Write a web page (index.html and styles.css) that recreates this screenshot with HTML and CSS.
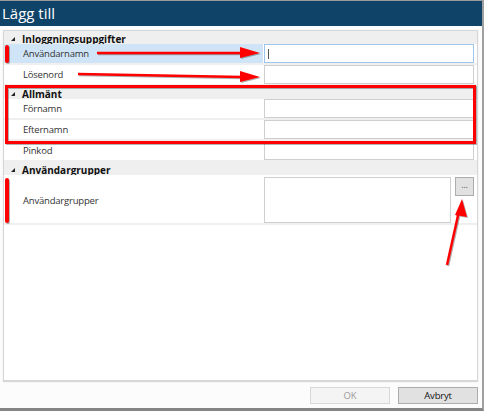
FILE: index.html
```html
<!DOCTYPE html>
<html>

<head>
    <meta name="viewport" content="width=device-width, initial-scale=1">
    <title>Lägg till</title>
    <link rel="stylesheet" href="styles.css">
</head>

<body>
    <div class="window">
        <div class="titlebar">Lägg till</div>

        <div class="content">
            <div class="grid">
                <div class="category"><span class="arrow"></span>Inloggningsuppgifter</div>
                <div class="row selected">
                    <div class="label">Användarnamn</div>
                    <div class="value"><div class="field focused"><span class="caret"></span></div></div>
                </div>
                <div class="row">
                    <div class="label">Lösenord</div>
                    <div class="value"><div class="field"></div></div>
                </div>

                <div class="category"><span class="arrow"></span>Allmänt</div>
                <div class="row">
                    <div class="label">Förnamn</div>
                    <div class="value"><div class="field"></div></div>
                </div>
                <div class="row">
                    <div class="label">Efternamn</div>
                    <div class="value"><div class="field"></div></div>
                </div>
                <div class="row">
                    <div class="label">Pinkod</div>
                    <div class="value"><div class="field"></div></div>
                </div>

                <div class="category"><span class="arrow"></span>Användargrupper</div>
                <div class="row tall">
                    <div class="label">Användargrupper</div>
                    <div class="value">
                        <div class="field area"></div>
                        <div class="dots">...</div>
                    </div>
                </div>
                <div class="empty"></div>
            </div>
        </div>

        <div class="footer">
            <div class="button disabled">OK</div>
            <div class="button">Avbryt</div>
        </div>

        <!-- red markup drawn on top of the dialog -->
        <svg class="marks" width="484" height="411" viewBox="0 0 484 411">
            <g fill="#f00" stroke="#f00">
                <rect x="5" y="44" width="4" height="18" rx="2" stroke="none" />
                <rect x="5" y="177" width="4" height="45" rx="2" stroke="none" />

                <line x1="97" y1="52" x2="242" y2="52" stroke-width="2.5" />
                <polygon points="240,46 260,52 240,57" stroke="none" />

                <line x1="78" y1="73" x2="242" y2="76" stroke-width="2.5" />
                <polygon points="240,70 260,76 240,81" stroke="none" />

                <rect x="6.5" y="85.5" width="468" height="56" fill="none" stroke-width="3" />

                <line x1="447" y1="264" x2="459" y2="210" stroke-width="2.5" />
                <polygon points="462,198 467,216 455,214" stroke="none" />
            </g>
        </svg>
    </div>
</body>

</html>
```

FILE: styles.css
```css
body {
    margin: 0;
    font-family: "Open Sans", "Noto Sans", sans-serif;
    font-size: 9.5px;
    letter-spacing: -0.2px;
    color: #333;
}

.window {
    position: relative;
    width: 484px;
    height: 411px;
    box-sizing: border-box;
    display: flex;
    flex-direction: column;
    background-color: #fcfcfc;
    border-top: 1px solid #9a9a9a;
    border-right: 2px solid #a0a0a0;
    border-bottom: 3px solid #858585;
}

.titlebar {
    height: 25px;
    line-height: 24px;
    padding-left: 2px;
    background-color: #0f4468;
    color: white;
    font-size: 15px;
    letter-spacing: 0;
}

.content {
    padding: 4px 4px 0 3px;
}

.grid {
    height: 349px;
    display: flex;
    flex-direction: column;
    border: 1px solid #d6d6d6;
    background-color: #efefef;
    box-shadow: 0 1px 1px #d8d8d8;
}

.category {
    height: 13px;
    flex-shrink: 0;
    display: flex;
    align-items: center;
    padding: 3px 0 0 7px;
    box-sizing: border-box;
    font-size: 10px;
    letter-spacing: 0;
    font-weight: bold;
    color: #111;
}

.arrow {
    width: 0;
    height: 0;
    margin: 0 7px 0 0;
    border-left: 4px solid transparent;
    border-bottom: 4px solid #222;
}

.row {
    display: flex;
    flex-shrink: 0;
    height: 19px;
    margin-bottom: 2px;
    background-color: white;
}

.row.tall {
    height: 48px;
}

.label {
    width: 240px;
    padding-left: 19px;
    line-height: 20px;
}

.row.tall .label {
    line-height: 52px;
}

.row.selected .label {
    background-color: #cfe5f7;
}

.value {
    flex: 1;
    display: flex;
    gap: 4px;
    padding-left: 1px;
    padding-right: 3px;
    background-color: white;
}

.field {
    flex: 1;
    height: 19px;
    box-sizing: border-box;
    border: 1px solid #cfcfcf;
    background-color: white;
}

.field.focused {
    border-color: #9ec6ec;
    padding: 4px 0 0 3px;
}

.caret {
    display: block;
    width: 1px;
    height: 10px;
    background-color: #555;
}

.field.area {
    height: 46px;
    margin-top: 2px;
}

.dots {
    width: 19px;
    height: 19px;
    margin-top: 2px;
    box-sizing: border-box;
    border: 1px solid #adadad;
    background-color: #e1e1e1;
    text-align: center;
    line-height: 14px;
    font-size: 9px;
    color: #555;
}

.empty {
    flex: 1;
    background-color: white;
}

.footer {
    flex: 1;
    display: flex;
    justify-content: flex-end;
    align-items: center;
    gap: 8px;
    padding: 2px 4px 0 0;
}

.button {
    width: 80px;
    height: 17px;
    box-sizing: border-box;
    border: 1px solid #adadad;
    background-color: #e1e1e1;
    text-align: center;
    line-height: 15px;
    color: #111;
}

.button.disabled {
    border-color: #d8d8d8;
    background-color: #f4f4f4;
    color: #9a9a9a;
}

.marks {
    position: absolute;
    top: 0;
    left: 0;
    filter: drop-shadow(1px 1px 0.5px rgba(0, 0, 0, 0.3));
}
```
